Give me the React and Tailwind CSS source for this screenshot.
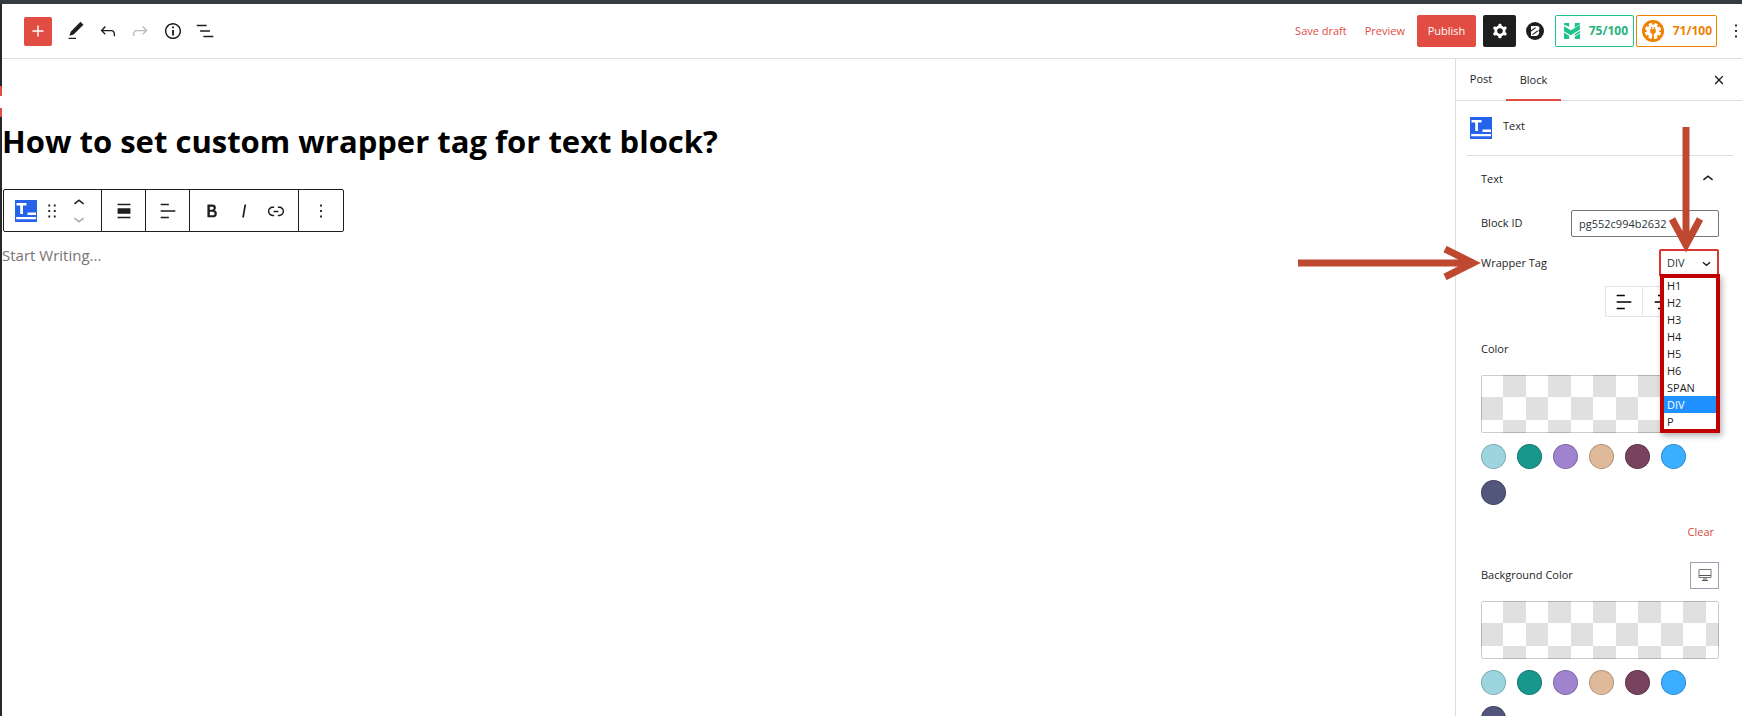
import React from "react";
import clsx from "clsx";

const PATHS = {
  plus: "M18 11.2h-5.2V6h-1.6v5.2H6v1.6h5.2V18h1.6v-5.2H18z",
  pencil: "M20.1 5.1L16.9 2 6.2 12.7l-1.3 4.4 4.5-1.3L20.1 5.1zM4 20.8h8v-1.5H4v1.5z",
  undo: "M18.3 11.7c-.6-.6-1.4-.9-2.3-.9H6.7l2.9-3.3-1.1-1-4.5 5L8.5 16l1-1-2.7-2.7H16c.5 0 .9.2 1.3.5 1 1 1 3.4 1 4.5v.3h1.5v-.2c0-1.5 0-4.3-1.5-5.7z",
  redo: "M15.6 6.5l-1.1 1 2.9 3.3H8c-.9 0-1.7.3-2.3.9-1.4 1.5-1.4 4.2-1.4 5.6v.2h1.5v-.3c0-1.1 0-3.5 1-4.5.3-.3.7-.5 1.3-.5h9.2L14.5 15l1.1 1.1 4.6-4.6-4.6-5z",
  info: "M12 3.2c-4.8 0-8.8 3.9-8.8 8.8 0 4.8 3.9 8.8 8.8 8.8 4.8 0 8.8-3.9 8.8-8.8 0-4.8-4-8.8-8.8-8.8zm0 16c-4 0-7.2-3.3-7.2-7.2C4.8 8 8 4.8 12 4.8s7.2 3.3 7.2 7.2c0 4-3.2 7.2-7.2 7.2zM11 17h2v-6h-2v6zm0-8h2V7h-2v2z",
  list: "M13.8 5.2H3v1.5h10.8V5.2zm-3.6 12v1.5H21v-1.5H10.2zm7.2-6H6.6v1.5h10.8v-1.5z",
  cog: "M10.289 4.836A1 1 0 0111.275 4h1.306a1 1 0 01.987.836l.244 1.466c.787.26 1.503.679 2.108 1.218l1.393-.522a1 1 0 011.216.437l.653 1.13a1 1 0 01-.23 1.273l-1.148.944a6.025 6.025 0 010 2.435l1.149.946a1 1 0 01.23 1.272l-.653 1.13a1 1 0 01-1.216.437l-1.394-.522c-.605.54-1.32.958-2.108 1.218l-.244 1.466a1 1 0 01-.987.836h-1.306a1 1 0 01-.986-.836l-.244-1.466a5.995 5.995 0 01-2.108-1.218l-1.394.522a1 1 0 01-1.217-.436l-.653-1.131a1 1 0 01.23-1.272l1.149-.946a6.026 6.026 0 010-2.435l-1.148-.944a1 1 0 01-.23-1.272l.653-1.131a1 1 0 011.217-.437l1.393.522a5.994 5.994 0 012.108-1.218l.244-1.466zM14.929 12a3 3 0 11-6 0 3 3 0 016 0z",
  more: "M13 19h-2v-2h2v2zm0-6h-2v-2h2v2zm0-6h-2V5h2v2z",
  drag: "M8 7h2V5H8v2zm0 6h2v-2H8v2zm0 6h2v-2H8v2zm6-14v2h2V5h-2zm0 8h2v-2h-2v2zm0 6h2v-2h-2v2z",
  up: "M6.5 12.4L12 8l5.5 4.4-.9 1.2L12 10l-4.5 3.6-1-1.2z",
  down: "M17.5 11.6L12 16l-5.5-4.4.9-1.2L12 14l4.5-3.6 1 1.2z",
  alignNone: "M5 15h14V9H5v6zm0 4.8h14v-1.5H5v1.5zM5 4.2v1.5h14V4.2H5z",
  alignLeft: "M4 19.8h8.9v-1.5H4v1.5zm8.9-15.6H4v1.5h8.9V4.2zm-8.9 7v1.5h16v-1.5H4z",
  alignCenter: "M16.4 4.2H7.6v1.5h8.9V4.2zM4 11.2v1.5h16v-1.5H4zm3.6 8.6h8.9v-1.5H7.6v1.5z",
  alignRight: "M11.1 19.8H20v-1.5h-8.9v1.5zm0-15.6v1.5H20V4.2h-8.9zM4 12.8h16v-1.5H4v1.5z",
  bold: "M14.7 11.3c1-.6 1.5-1.6 1.5-3 0-2.3-1.3-3.4-4-3.4H7v14h5.8c1.4 0 2.5-.3 3.3-1 .8-.7 1.2-1.7 1.2-2.9.1-1.9-.8-3.1-2.6-3.7zm-5.1-4h2.3c.6 0 1.1.1 1.4.4.3.3.5.7.5 1.2s-.2 1-.5 1.2c-.3.3-.8.4-1.4.4H9.6V7.3zm4.6 9c-.4.3-1 .4-1.7.4H9.6v-3.9h2.9c.7 0 1.3.2 1.7.5.4.3.6.8.6 1.5s-.2 1.2-.6 1.5z",
  italic: "M12.5 5L10 19h1.9l2.5-14z",
  link: "M15.6 7.2H14v1.5h1.6c2 0 3.7 1.7 3.7 3.7s-1.7 3.7-3.7 3.7H14v1.5h1.6c2.8 0 5.2-2.3 5.2-5.2 0-2.9-2.3-5.2-5.2-5.2zM4.7 12.4c0-2 1.7-3.7 3.7-3.7H10V7.2H8.4c-2.9 0-5.2 2.3-5.2 5.2 0 2.9 2.3 5.2 5.2 5.2H10v-1.5H8.4c-2 0-3.7-1.7-3.7-3.7zm4.6.9h5.3v-1.5H9.3v1.5z",
  close: "M12 13.06l3.712 3.713 1.061-1.06L13.061 12l3.712-3.712-1.06-1.06L12 10.938 8.288 7.227l-1.061 1.06L10.939 12l-3.712 3.712 1.06 1.061L12 13.061z",
};

function Icon({ name, className }) {
  return (
    <svg viewBox="0 0 24 24" className={clsx("size-[22px] shrink-0", className)} fill="currentColor" fillRule="evenodd" aria-hidden="true">
      <path d={PATHS[name]} />
    </svg>
  );
}

function IconButton({ name, label, className, iconClass, ...rest }) {
  return (
    <button type="button" aria-label={label} className={clsx("flex shrink-0 items-center justify-center", className)} {...rest}>
      <Icon name={name} className={iconClass} />
    </button>
  );
}

function TextBlockIcon() {
  return (
    <svg viewBox="0 0 22 22" className="size-[22px] shrink-0" aria-hidden="true">
      <rect width="22" height="22" fill="#2563eb" />
      <path d="M1.500 3h10v2.400H8V14H5.200V5.400H1.500z" fill="#fff" />
      <path d="M12.500 12.600H21V15h-8.500z M1.200 17h19.800v2.200H1.200z" fill="#fff" />
    </svg>
  );
}

function ScoreMark() {
  return (
    <svg viewBox="0 0 16 16" className="size-4 shrink-0" aria-hidden="true">
      <path d="M0 0h5.200v3.800L0 1.800zM10.800 0H16v1.200l-5.200 3.600z" fill="#1fc28a" />
      <path d="M0 3.200l6.800 4L16 2v4.400l-9.200 5.800L0 8.200z" fill="#1fc28a" />
      <path d="M0 9.500l5.200 3.200V16H0zM16 7.700V16h-5.200v-5z" fill="#1fc28a" />
      <path d="M10.500 13.500L16 10" stroke="#fff" strokeWidth=".8" />
    </svg>
  );
}

function PlugMark() {
  return (
    <svg viewBox="0 0 22 22" className="size-[22px] shrink-0" aria-hidden="true">
      <circle cx="11" cy="11" r="11" fill="#f08000" />
      <circle cx="11" cy="11" r="6.400" fill="#fff" />
      <circle cx="11" cy="11" r="6.900" fill="none" stroke="#fff" strokeWidth="2.600" strokeDasharray="3.300 2.119" transform="rotate(9 11 11)" />
      <path d="M9.600 7v2.500M12.400 7v2.500" stroke="#f08000" strokeWidth="1.200" />
      <path d="M8.200 9.300h5.600v1.900c0 1.300-.8 2.200-2 2.500V19h-1.600v-5.300c-1.200-.3-2-1.200-2-2.500z" fill="#f08000" />
    </svg>
  );
}

function BrandMark() {
  return (
    <svg viewBox="0 0 18 18" className="size-[18px]" aria-hidden="true">
      <circle cx="9" cy="9" r="9" fill="#1e1e1e" />
      <path d="M5 4h6c1.700 0 2.600.9 2.500 2.300-.1 1.100-.6 1.800-1.400 2.300.8.500 1.200 1.200 1.100 2.200-.2 1.900-1.500 3.200-3.500 3.200H5z" fill="#fff" />
      <path d="M4.500 9.200L9.600 5.600M6.500 12.600L11.600 9" stroke="#1e1e1e" strokeWidth="1.100" />
    </svg>
  );
}

function Header() {
  return (
    <header className="flex h-[55px] items-center justify-between overflow-hidden border-b border-[#ddd] pl-[22px] text-[#1e1e1e]">
      <div className="flex items-center">
        <IconButton name="plus" label="Add block" className="mr-2 h-[29px] w-7 rounded-xs bg-[#e14d43] text-white" />
        <IconButton name="pencil" label="Tools" className="size-8" />
        <IconButton name="undo" label="Undo" className="size-8" />
        <IconButton name="redo" label="Redo" className="size-8 text-[#bbb]" disabled />
        <IconButton name="info" label="Details" className="ml-px size-8" />
        <IconButton name="list" label="List view" className="size-8" />
      </div>
      <div className="flex items-center text-[11px]">
        <button type="button" className="text-[#e14d43]">Save draft</button>
        <button type="button" className="ml-[18px] text-[#e14d43]">Preview</button>
        <button type="button" className="ml-3 h-8 w-[59px] rounded-xs bg-[#e14d43] text-white">Publish</button>
        <IconButton name="cog" label="Settings" className="ml-[7px] h-8 w-[33px] rounded-xs bg-[#1e1e1e] text-white" />
        <button type="button" aria-label="Blocks library" className="ml-[10px]"><BrandMark /></button>
        <button type="button" className="ml-[11px] flex h-8 w-[79px] items-center justify-between rounded-xs border border-[#1fc28a] pr-[5px] pl-2 text-[12px] font-bold text-[#27b27c]">
          <ScoreMark />75/100
        </button>
        <button type="button" className="ml-0.5 flex h-8 w-[81px] items-center justify-between rounded-xs border border-[#f08000] pr-1 pl-[5px] text-[12px] font-bold text-[#f08000]">
          <PlugMark />71/100
        </button>
        <IconButton name="more" label="Options" className="-mr-[5px] ml-2" />
      </div>
    </header>
  );
}

function BlockToolbar() {
  const cell = "flex items-center border-r border-[#1e1e1e]";
  return (
    <div role="toolbar" aria-label="Block tools" className="ml-px flex h-[43px] w-fit rounded-xs border border-[#1e1e1e] text-[#1e1e1e]">
      <div className={clsx(cell, "w-[98px] pl-[11px]")}>
        <button type="button" aria-label="Text"><TextBlockIcon /></button>
        <IconButton name="drag" label="Drag" className="ml-1" />
        <div className="ml-[5px] flex flex-col">
          <IconButton name="up" label="Move up" className="h-4 w-[22px] overflow-hidden" />
          <IconButton name="down" label="Move down" className="h-4 w-[22px] overflow-hidden text-[#aaa]" disabled />
        </div>
      </div>
      <div className={clsx(cell, "w-11 justify-center")}><IconButton name="alignNone" label="Align" /></div>
      <div className={clsx(cell, "w-11 justify-center")}><IconButton name="alignLeft" label="Align text" /></div>
      <div className={clsx(cell, "w-[109px] justify-center gap-[10px]")}>
        <IconButton name="bold" label="Bold" />
        <IconButton name="italic" label="Italic" />
        <IconButton name="link" label="Link" />
      </div>
      <div className="flex w-11 items-center justify-center"><IconButton name="more" label="More" /></div>
    </div>
  );
}

const SWATCHES = [
  ["Aqua", "bg-[#9dd5de]"],
  ["Teal", "bg-[#18978c]"],
  ["Lavender", "bg-[#a083cf]"],
  ["Sand", "bg-[#deb99a]"],
  ["Plum", "bg-[#784360]"],
  ["Sky", "bg-[#3caeff]"],
  ["Indigo", "bg-[#52557c]"],
];

function ColorPalette({ label }) {
  return (
    <>
      <button
        type="button"
        aria-label={label + " custom picker"}
        className="block h-[58px] w-full rounded-xs bg-[repeating-linear-gradient(45deg,#e0e0e0_25%,transparent_0,transparent_75%,#e0e0e0_0,#e0e0e0),repeating-linear-gradient(45deg,#e0e0e0_25%,transparent_0,transparent_75%,#e0e0e0_0,#e0e0e0)] bg-[length:45px_45px] bg-[position:0_0,22px_22px] shadow-[inset_0_0_0_1px_rgba(0,0,0,0.2)]"
      />
      <div className="mt-[11px] flex flex-wrap gap-[11px]">
        {SWATCHES.map(([name, bg]) => (
          <button key={name} type="button" aria-label={name} className={clsx("size-[25px] rounded-full shadow-[inset_0_0_0_1px_rgba(0,0,0,0.2)]", bg)} />
        ))}
      </div>
    </>
  );
}

const TAGS = ["H1", "H2", "H3", "H4", "H5", "H6", "SPAN", "DIV", "P"];

function WrapperTagSelect() {
  return (
    <div className="relative">
      <select
        id="wrapper-tag"
        defaultValue="DIV"
        className="block h-7 w-[60px] appearance-none rounded-xs border-2 border-[#d9372f] bg-white pl-[6px] text-[11px] text-[#2c3338]"
      >
        {TAGS.map((t) => <option key={t}>{t}</option>)}
      </select>
      <svg viewBox="0 0 10 6" className="pointer-events-none absolute top-3 right-2 h-[6px] w-[9px]" fill="none" stroke="#1e1e1e" strokeWidth="1.500" aria-hidden="true">
        <path d="M1 1l4 3.500L9 1" />
      </svg>
      <svg viewBox="0 0 36 126" className="pointer-events-none absolute right-[15px] bottom-6 z-20 h-[126px] w-9" fill="none" stroke="#bf4930" strokeWidth="7" aria-hidden="true">
        <path d="M18 0v112M4 92l14 26 14-26" />
      </svg>
      <div className="absolute top-[25px] -right-px z-10 h-[159px] w-[60px] overflow-hidden border-4 border-[#c00000] bg-white shadow-[2px_3px_6px_rgba(0,0,0,0.3)]">
        <ul role="listbox" aria-label="Wrapper tag options" className="-mt-px text-[11px] leading-[17px] text-[#1e1e1e]">
          {TAGS.map((t) => (
            <li key={t} role="option" aria-selected={t === "DIV"} className={clsx("h-[17px] pl-[3px]", t === "DIV" && "bg-[#1e90ff] text-white")}>{t}</li>
          ))}
        </ul>
      </div>
    </div>
  );
}

function Sidebar() {
  const row = "flex items-center justify-between";
  return (
    <aside className="flex w-[287px] shrink-0 flex-col border-l border-[#ddd] text-[11px] text-[#1e1e1e]">
      <div className="flex h-[42px] shrink-0 items-stretch border-b border-[#ddd]">
        <button type="button" className="w-[50px]">Post</button>
        <button type="button" className="-mb-px w-[55px] border-y-2 border-t-transparent border-b-[#e14d43]">Block</button>
        <IconButton name="close" label="Close settings" className="mr-3 ml-auto" />
      </div>
      <div className="mr-[9px] ml-[11px] flex h-[55px] shrink-0 gap-[11px] border-b border-[#ddd] pt-4 pl-[3px]">
        <TextBlockIcon />
        <span className="leading-[18px]">Text</span>
      </div>
      <div className="flex flex-col pr-[23px] pl-[25px]">
        <button type="button" className={clsx(row, "h-[46px]")}>
          Text
          <Icon name="up" />
        </button>
        <div className={clsx(row, "mt-[7px] h-7")}>
          <label htmlFor="block-id">Block ID</label>
          <input id="block-id" defaultValue="pg552c994b2632" className="h-[27px] w-[148px] rounded-xs border border-[#757575] px-[7px] text-[#2c3338]" />
        </div>
        <div className={clsx(row, "relative mt-3 h-7")}>
          <label htmlFor="wrapper-tag">Wrapper Tag</label>
          <svg viewBox="0 0 183 34" className="pointer-events-none absolute right-full h-[34px] w-[183px]" fill="none" stroke="#bf4930" strokeWidth="7" aria-hidden="true">
            <path d="M0 17h168M147 3l28 14-28 14" />
          </svg>
          <WrapperTagSelect />
        </div>
        <div className="mt-[9px] flex justify-end">
          {["alignLeft", "alignCenter", "alignRight"].map((n, i) => (
            <IconButton key={n} name={n} label={n} iconClass="text-black" className={clsx("h-[31px] w-[38px] border border-[#e2e4ec]", i > 0 && "border-l-0")} />
          ))}
        </div>
        <div className={clsx(row, "mt-[18px] h-7")}>Color</div>
        <div className="mt-3"><ColorPalette label="Color" /></div>
        <div className="mt-4 flex justify-end pr-[5px]">
          <button type="button" className="h-[22px] text-[#d9483f]">Clear</button>
        </div>
        <div className={clsx(row, "mt-[18px] h-7")}>
          Background Color
          <button type="button" aria-label="Desktop" className="flex h-[27px] w-[29px] items-center justify-center border border-[#9ca3b4]">
            <svg viewBox="0 0 14 12" className="h-3 w-[14px]" fill="none" stroke="#777" aria-hidden="true">
              <path d="M1 .5h12v8H1z" />
              <path d="M1 6.500h12" stroke="#555" />
              <path d="M6 9v2M8 9v2M4 11.500h6" stroke="#555" />
            </svg>
          </button>
        </div>
        <div className="mt-3"><ColorPalette label="Background color" /></div>
      </div>
    </aside>
  );
}

export default function App() {
  return (
    <div className="flex h-screen flex-col overflow-hidden bg-white font-['Open_Sans','Noto_Sans',sans-serif]">
      <div className="h-1 shrink-0 bg-[#363b40]" />
      <div className="flex min-h-0 flex-1">
        <div className="flex w-0.5 shrink-0 flex-col bg-[#23282d]">
          <div className="mt-[82px] flex h-[31px] flex-col justify-center bg-[#e14d43]">
            <div className="h-3 bg-white" />
          </div>
        </div>
        <div className="flex min-w-0 flex-1 flex-col">
          <Header />
          <div className="flex min-h-0 flex-1">
            <main className="min-w-0 flex-1 pt-[60px]">
              <h1 className="text-[31px] leading-[44px] font-bold text-black">How to set custom wrapper tag for text block?</h1>
              <div className="mt-[26px]"><BlockToolbar /></div>
              <input aria-label="Block content" placeholder="Start Writing..." className="mt-[11px] block h-6 w-full text-[15px] text-black placeholder:text-[#757575]" />
            </main>
            <Sidebar />
          </div>
        </div>
      </div>
    </div>
  );
}
